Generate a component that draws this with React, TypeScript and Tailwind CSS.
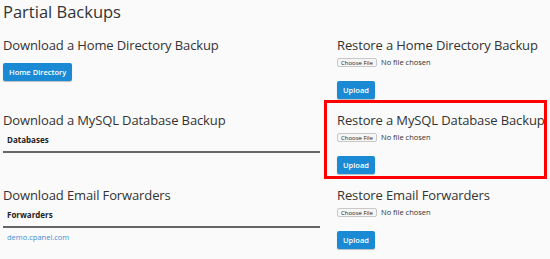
import type { ReactNode } from "react"

const font = { fontFamily: '"Open Sans", "Liberation Sans", sans-serif' }

function BlueButton({ children }: { children: ReactNode }) {
  return (
    <button className="h-[18px] rounded-[2px] bg-[#1a8ad5] px-[6px] text-[7.5px] font-semibold leading-[18px] text-white shadow-[0_1px_1px_rgba(0,0,0,0.25)]">
      {children}
    </button>
  )
}

function FileInput() {
  return (
    <div className="flex h-[9px] items-center">
      <span className="flex h-[9px] w-[40px] items-center justify-center rounded-[2px] border border-[#c8c8c8] bg-[#f6f6f6] text-[6px] leading-none text-[#222]">
        Choose File
      </span>
      <span className="ml-[4px] text-[7.5px] leading-none text-[#333]">No file chosen</span>
    </div>
  )
}

function Restore({ title, highlight }: { title: string; highlight?: boolean }) {
  return (
    <div className="relative h-[75px]">
      {highlight && (
        <span className="pointer-events-none absolute -left-[13px] -top-[11px] h-[79px] w-[223px] border-[3px] border-[#ff0000]" />
      )}
      <h2 className="whitespace-nowrap text-[13px] leading-[18px] tracking-[-0.12px] text-[#333]">{title}</h2>
      <div className="mt-[4px]">
        <FileInput />
      </div>
      <div className="mt-[8px]">
        <BlueButton>Upload</BlueButton>
      </div>
    </div>
  )
}

function TableHead({ label }: { label: string }) {
  return (
    <div className="border-b-2 border-[#666] pb-[5px] pl-[4px] text-[8px] font-bold leading-[12px] text-[#222]">
      {label}
    </div>
  )
}

export default function App() {
  return (
    <div className="h-[259px] w-[550px] overflow-hidden bg-[#fafafa] px-[3px] pt-[1px]" style={font}>
      <h1 className="text-[16.5px] leading-[22px] text-[#333]">Partial Backups</h1>

      <div className="mt-[13px] grid grid-cols-[317px_1fr] gap-x-[17px]">
        <div className="h-[75px]">
          <h2 className="text-[13px] leading-[18px] tracking-[-0.12px] text-[#333]">Download a Home Directory Backup</h2>
          <div className="mt-[3px]">
            <BlueButton>Home Directory</BlueButton>
          </div>
        </div>
        <Restore title="Restore a Home Directory Backup" />

        <div className="h-[75px]">
          <h2 className="text-[13px] leading-[18px] tracking-[-0.12px] text-[#333]">Download a MySQL Database Backup</h2>
          <div className="mt-[5px]">
            <TableHead label="Databases" />
          </div>
        </div>
        <Restore title="Restore a MySQL Database Backup" highlight />

        <div className="h-[75px]">
          <h2 className="text-[13px] leading-[18px] tracking-[-0.12px] text-[#333]">Download Email Forwarders</h2>
          <div className="mt-[5px]">
            <TableHead label="Forwarders" />
          </div>
          <a href="#" className="mt-[3px] block pl-[4px] text-[7.5px] leading-[12px] text-[#3d8fd6]">
            demo.cpanel.com
          </a>
        </div>
        <Restore title="Restore Email Forwarders" />
      </div>
    </div>
  )
}
